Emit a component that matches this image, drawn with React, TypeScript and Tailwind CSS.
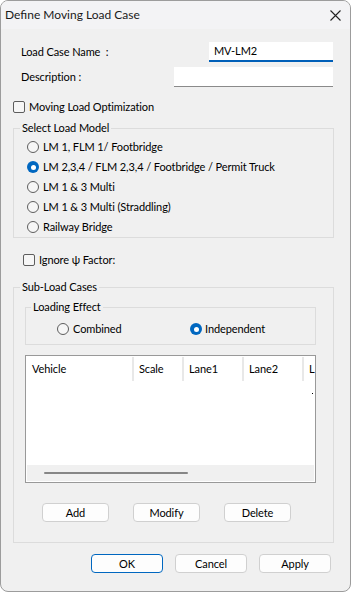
import React from "react";

const font = { fontFamily: 'Lato, "Noto Sans", sans-serif' };

function Radio({ checked = false }: { checked?: boolean }) {
  if (checked) {
    return (
      <span className="flex h-[12px] w-[12px] shrink-0 items-center justify-center rounded-full bg-[#0067c0]">
        <span className="h-[5px] w-[5px] rounded-full bg-white" />
      </span>
    );
  }
  return <span className="h-[12px] w-[12px] shrink-0 rounded-full border border-[#5d5d5d] bg-[#f6f6f6]" />;
}

function Check() {
  return <span className="h-[12px] w-[12px] shrink-0 rounded-[2px] border border-[#5d5d5d] bg-[#f6f6f6]" />;
}

function Button({ label, primary = false, w }: { label: string; primary?: boolean; w: string }) {
  return (
    <div
      className={`flex h-[19px] ${w} items-center justify-center rounded-[4px] border bg-[#fdfdfd] text-black ${
        primary ? "border-[#0067c0]" : "border-[#d0d0d0]"
      }`}
    >
      {label}
    </div>
  );
}

const models = [
  "LM 1, FLM 1/ Footbridge",
  "LM 2,3,4 / FLM 2,3,4 / Footbridge / Permit Truck",
  "LM 1 & 3 Multi",
  "LM 1 & 3 Multi (Straddling)",
  "Railway Bridge",
];

export default function App() {
  return (
    <div
      style={font}
      className="flex h-[592px] w-[351px] flex-col overflow-hidden rounded-[8px] border border-[#9c9c9c] bg-[#f0f0f0] text-[11px] leading-[16px] tracking-[-0.1px] text-black"
    >
      {/* title bar */}
      <div className="flex h-[28px] shrink-0 items-center justify-between bg-[#f3f3f5] pl-[4px] pr-[9px] text-[12px] tracking-normal">
        <span className="text-[#1a1a1a]">Define Moving Load Case</span>
        <svg width="11" height="11" viewBox="0 0 11 11" className="text-[#222]">
          <path d="M0.5 0.5 L10.5 10.5 M10.5 0.5 L0.5 10.5" stroke="currentColor" strokeWidth="1.1" />
        </svg>
      </div>

      {/* name */}
      <div className="mt-[13px] flex h-[20px] items-center pl-[20px] pr-[17px]">
        <span>Load Case Name&nbsp; :</span>
        <div className="ml-auto flex h-[20px] w-[124px] items-center border-b-2 border-[#005fb8] bg-white pl-[5px]">
          MV-LM2
        </div>
      </div>
      <div className="mt-[5px] flex h-[20px] items-center pl-[20px] pr-[17px]">
        <span>Description :</span>
        <div className="ml-auto h-[20px] w-[159px] border-b border-[#8a8a8a] bg-white" />
      </div>

      <div className="mt-[14px] flex h-[12px] items-center gap-[4px] pl-[12px]">
        <Check />
        <span>Moving Load Optimization</span>
      </div>

      {/* select load model */}
      <fieldset className="ml-[12px] mt-[7px] w-[321px] border border-[#dcdcdc]">
        <legend className="ml-[6px] px-[2px]">Select Load Model</legend>
        <div className="flex flex-col pl-[13px] pt-[1px]">
          {models.map((m, i) => (
            <div key={m} className="flex h-[20px] items-center gap-[4px]">
              <Radio checked={i === 1} />
              <span>{m}</span>
            </div>
          ))}
        </div>
      </fieldset>

      <div className="mt-[16px] flex h-[12px] items-center gap-[4px] pl-[22px]">
        <Check />
        <span>Ignore ψ Factor:</span>
      </div>

      {/* sub-load cases */}
      <fieldset className="ml-[12px] mt-[13px] w-[321px] border border-[#dcdcdc] pb-[20px]">
        <legend className="ml-[6px] px-[2px]">Sub-Load Cases</legend>

        <fieldset className="ml-[11px] mt-[4px] w-[291px] border border-[#dcdcdc] pb-[5px]">
          <legend className="ml-[5px] px-[2px]">Loading Effect</legend>
          <div className="mt-[4px] flex h-[20px] items-center pl-[31px]">
            <div className="flex w-[133px] items-center gap-[4px]">
              <Radio />
              <span>Combined</span>
            </div>
            <div className="flex items-center gap-[3px]">
              <Radio checked />
              <span>Independent</span>
            </div>
          </div>
        </fieldset>

        {/* list */}
        <div className="ml-[11px] mt-[10px] flex h-[128px] w-[291px] flex-col border border-[#999] bg-white">
          <div className="flex h-[25px] items-center overflow-hidden pt-[1px]">
            <div className="flex h-[24px] w-[108px] shrink-0 items-center border-r-2 border-[#e8e8e8] pl-[6px]">Vehicle</div>
            <div className="flex h-[24px] w-[50px] shrink-0 items-center border-r-2 border-[#e8e8e8] pl-[5px]">Scale</div>
            <div className="flex h-[24px] w-[60px] shrink-0 items-center border-r-2 border-[#e8e8e8] pl-[5px]">Lane1</div>
            <div className="flex h-[24px] w-[60px] shrink-0 items-center border-r-2 border-[#e8e8e8] pl-[5px]">Lane2</div>
            <div className="flex h-[24px] shrink-0 items-center pl-[5px]">L</div>
          </div>
          <div className="flex flex-1 justify-end pr-[2px] pt-[12px]">
            <span className="h-[1px] w-[1px] bg-black" />
          </div>
          <div className="mx-[1px] mb-[1px] flex h-[16px] items-center bg-[#f0f0f0] pl-[17px]">
            <div className="h-[2px] w-[144px] rounded-full bg-[#868686]" />
          </div>
        </div>

        <div className="mt-[20px] flex gap-[24px] pl-[28px]">
          <Button label="Add" w="w-[67px]" />
          <Button label="Modify" w="w-[67px]" />
          <Button label="Delete" w="w-[67px]" />
        </div>
      </fieldset>

      <div className="mt-[11px] flex gap-[12px] pl-[90px]">
        <Button label="OK" primary w="w-[72px]" />
        <Button label="Cancel" w="w-[72px]" />
        <Button label="Apply" w="w-[72px]" />
      </div>
    </div>
  );
}
